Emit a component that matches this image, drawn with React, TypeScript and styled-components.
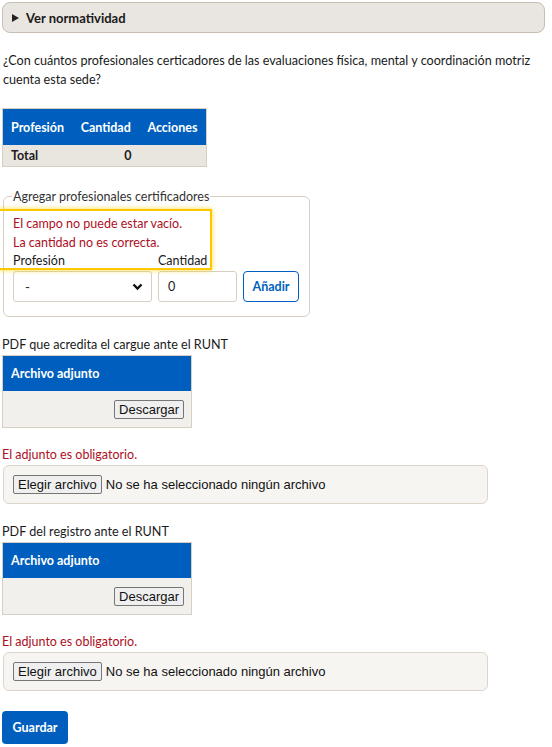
import styled, { createGlobalStyle } from "styled-components";

const Global = createGlobalStyle`
  html, body {
    margin: 0;
    background: #fff;
  }
  body {
    font-family: Lato, "Liberation Sans", sans-serif;
    font-size: 12.6px;
    color: #1b1b1b;
  }
`;

const Page = styled.div`
  padding: 2px 7px 4px 2px;
`;

const Details = styled.div`
  height: 29px;
  border: 1px solid #c8beb2;
  border-radius: 8px;
  background: #e9e5e0;
  display: flex;
  align-items: center;
  padding-left: 9px;
  gap: 7px;
  font-weight: 700;
  font-size: 13px;
  color: #1a1a1a;
`;

const Triangle = styled.span`
  width: 0;
  height: 0;
  border-top: 4px solid transparent;
  border-bottom: 4px solid transparent;
  border-left: 7px solid #222;
`;

const Question = styled.p`
  margin: 18px 0 0 1px;
  line-height: 19px;
`;

const Table = styled.table<{ $width: number }>`
  width: ${(p) => p.$width}px;
  border-collapse: collapse;
  border: 1px solid #d8cfc3;
  font-size: 12.5px;
`;

const Head = styled.th<{ $h: number }>`
  background: #005fbe;
  color: #fff;
  font-weight: 700;
  text-align: left;
  height: ${(p) => p.$h}px;
  padding: 0 8px;
  white-space: nowrap;
`;

const TotalCell = styled.td<{ $right?: boolean }>`
  background: #e9e5df;
  font-weight: 700;
  height: 21px;
  padding: 0 8px;
  text-align: ${(p) => (p.$right ? "right" : "left")};
`;

const Fieldset = styled.fieldset`
  position: relative;
  width: 283px;
  margin: 22px 0 0 1px;
  padding: 10px 10px 14px 9px;
  border: 1px solid #d8cfc3;
  border-radius: 6px;
`;

const Legend = styled.legend`
  padding: 0 1px;
  margin-left: -1px;
  color: #333;
  font-size: 12.5px;
`;

const Highlight = styled.div`
  position: absolute;
  left: -7px;
  top: 5px;
  width: 211px;
  height: 57px;
  border: 2px solid #ffc700;
  box-shadow: 0 0 5px rgba(255, 210, 0, 0.8);
  pointer-events: none;
`;

const Error = styled.div`
  color: #ad0f1e;
  line-height: 19px;
  font-size: 12.5px;
`;

const FieldGrid = styled.div`
  display: grid;
  grid-template-columns: 139px 79px auto;
  column-gap: 6px;
  margin-top: 1px;
`;

const Label = styled.label`
  font-size: 12.5px;
  line-height: 15px;
  padding-bottom: 3px;
`;

const Select = styled.div`
  height: 29px;
  border: 1px solid #d8cfc3;
  border-radius: 3px;
  display: flex;
  align-items: center;
  justify-content: space-between;
  padding: 0 8px 0 11px;
  font-size: 13px;
`;

const TextInput = styled.div`
  height: 29px;
  border: 1px solid #d8cfc3;
  border-radius: 3px;
  display: flex;
  align-items: center;
  padding-left: 9px;
`;

const AddButton = styled.button`
  width: 56px;
  height: 31px;
  border: 1px solid #005fbe;
  border-radius: 4px;
  background: #fff;
  color: #005fbe;
  font-family: inherit;
  font-weight: 700;
  font-size: 12.5px;
  padding: 0;
`;

const Section = styled.div<{ $top: number }>`
  margin-top: ${(p) => p.$top}px;
`;

const Caption = styled.div`
  line-height: 16px;
  margin-bottom: 2px;
`;

const FileBody = styled.td`
  background: #f2f0ed;
  height: 36px;
  text-align: right;
  padding: 0 7px;
`;

const NativeButton = styled.button`
  font-family: "Liberation Sans", Arial, sans-serif;
  font-size: 13px;
  color: #111;
  background: #efefef;
  border: 1px solid #767676;
  border-radius: 2px;
  padding: 0 4px;
  height: 19px;
  line-height: 17px;
`;

const ErrorLine = styled(Error)`
  margin: 17px 0 1px 0;
`;

const FileBox = styled.div`
  width: 474px;
  height: 37px;
  margin-left: 1px;
  border: 1px solid #ddd5ca;
  border-radius: 6px;
  background: #f7f5f2;
  display: flex;
  align-items: center;
  gap: 4px;
  padding-left: 9px;
`;

const FileText = styled.span`
  font-family: "Liberation Sans", Arial, sans-serif;
  font-size: 13px;
  color: #111;
`;

const SaveButton = styled.button`
  margin-top: 20px;
  width: 66px;
  height: 33px;
  border: none;
  border-radius: 4px;
  background: #005fbe;
  color: #fff;
  font-family: inherit;
  font-weight: 700;
  font-size: 12.5px;
`;

function FileSection({ title, top }: { title: string; top: number }) {
  return (
    <Section $top={top}>
      <Caption>{title}</Caption>
      <Table $width={190}>
        <thead>
          <tr>
            <Head $h={35}>Archivo adjunto</Head>
          </tr>
        </thead>
        <tbody>
          <tr>
            <FileBody>
              <NativeButton>Descargar</NativeButton>
            </FileBody>
          </tr>
        </tbody>
      </Table>
      <ErrorLine>El adjunto es obligatorio.</ErrorLine>
      <FileBox>
        <NativeButton>Elegir archivo</NativeButton>
        <FileText>No se ha seleccionado ningún archivo</FileText>
      </FileBox>
    </Section>
  );
}

export default function App() {
  return (
    <Page>
      <Global />
      <Details>
        <Triangle />
        Ver normatividad
      </Details>
      <Question>
        ¿Con cuántos profesionales certicadores de las evaluaciones física, mental y coordinación motriz
        cuenta esta sede?
      </Question>
      <Section $top={19}>
        <Table $width={205}>
          <thead>
            <tr>
              <Head $h={36}>Profesión</Head>
              <Head $h={36}>Cantidad</Head>
              <Head $h={36}>Acciones</Head>
            </tr>
          </thead>
          <tbody>
            <tr>
              <TotalCell>Total</TotalCell>
              <TotalCell $right>0</TotalCell>
              <TotalCell />
            </tr>
          </tbody>
        </Table>
      </Section>
      <Fieldset>
        <Legend>Agregar profesionales certificadores</Legend>
        <Highlight />
        <Error>El campo no puede estar vacío.</Error>
        <Error>La cantidad no es correcta.</Error>
        <FieldGrid>
          <Label>Profesión</Label>
          <Label>Cantidad</Label>
          <span />
          <Select>
            <span>-</span>
            <svg width="11" height="8" viewBox="0 0 11 8">
              <path d="M1.5 1.5 L5.5 5.5 L9.5 1.5" fill="none" stroke="#111" strokeWidth="2.4" />
            </svg>
          </Select>
          <TextInput>0</TextInput>
          <AddButton>Añadir</AddButton>
        </FieldGrid>
      </Fieldset>
      <FileSection title="PDF que acredita el cargue ante el RUNT" top={20} />
      <FileSection title="PDF del registro ante el RUNT" top={20} />
      <SaveButton>Guardar</SaveButton>
    </Page>
  );
}
